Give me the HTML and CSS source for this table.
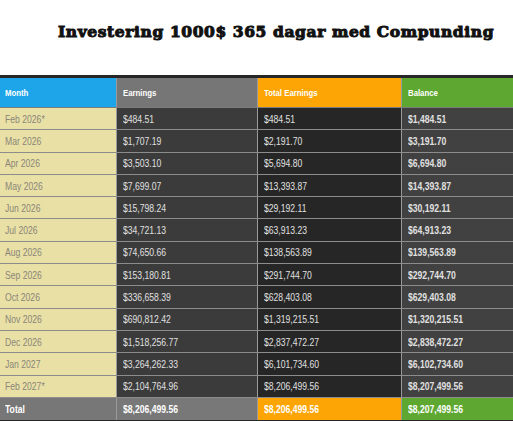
FILE: index.html
```html
<!DOCTYPE html>
<html lang="sv">
<head>
<meta charset="utf-8">
<title>Investering</title>
<link rel="stylesheet" href="styles.css">
</head>
<body>
<h1 class="title">Investering 1000$ 365 dagar med Compunding</h1>
<table class="grid">
  <colgroup>
    <col class="c-month"><col class="c-earn"><col class="c-total"><col class="c-bal">
  </colgroup>
  <thead>
    <tr>
      <th class="h-month"><span class="v">Month</span></th>
      <th class="h-earn"><span class="v">Earnings</span></th>
      <th class="h-total"><span class="v">Total Earnings</span></th>
      <th class="h-bal"><span class="v">Balance</span></th>
    </tr>
  </thead>
  <tbody>
    <tr><td class="m"><span class="v">Feb 2026*</span></td><td class="e"><span class="v">$484.51</span></td><td class="t"><span class="v">$484.51</span></td><td class="b"><span class="v">$1,484.51</span></td></tr>
    <tr><td class="m"><span class="v">Mar 2026</span></td><td class="e"><span class="v">$1,707.19</span></td><td class="t"><span class="v">$2,191.70</span></td><td class="b"><span class="v">$3,191.70</span></td></tr>
    <tr><td class="m"><span class="v">Apr 2026</span></td><td class="e"><span class="v">$3,503.10</span></td><td class="t"><span class="v">$5,694.80</span></td><td class="b"><span class="v">$6,694.80</span></td></tr>
    <tr><td class="m"><span class="v">May 2026</span></td><td class="e"><span class="v">$7,699.07</span></td><td class="t"><span class="v">$13,393.87</span></td><td class="b"><span class="v">$14,393.87</span></td></tr>
    <tr><td class="m"><span class="v">Jun 2026</span></td><td class="e"><span class="v">$15,798.24</span></td><td class="t"><span class="v">$29,192.11</span></td><td class="b"><span class="v">$30,192.11</span></td></tr>
    <tr><td class="m"><span class="v">Jul 2026</span></td><td class="e"><span class="v">$34,721.13</span></td><td class="t"><span class="v">$63,913.23</span></td><td class="b"><span class="v">$64,913.23</span></td></tr>
    <tr><td class="m"><span class="v">Aug 2026</span></td><td class="e"><span class="v">$74,650.66</span></td><td class="t"><span class="v">$138,563.89</span></td><td class="b"><span class="v">$139,563.89</span></td></tr>
    <tr><td class="m"><span class="v">Sep 2026</span></td><td class="e"><span class="v">$153,180.81</span></td><td class="t"><span class="v">$291,744.70</span></td><td class="b"><span class="v">$292,744.70</span></td></tr>
    <tr><td class="m"><span class="v">Oct 2026</span></td><td class="e"><span class="v">$336,658.39</span></td><td class="t"><span class="v">$628,403.08</span></td><td class="b"><span class="v">$629,403.08</span></td></tr>
    <tr><td class="m"><span class="v">Nov 2026</span></td><td class="e"><span class="v">$690,812.42</span></td><td class="t"><span class="v">$1,319,215.51</span></td><td class="b"><span class="v">$1,320,215.51</span></td></tr>
    <tr><td class="m"><span class="v">Dec 2026</span></td><td class="e"><span class="v">$1,518,256.77</span></td><td class="t"><span class="v">$2,837,472.27</span></td><td class="b"><span class="v">$2,838,472.27</span></td></tr>
    <tr><td class="m"><span class="v">Jan 2027</span></td><td class="e"><span class="v">$3,264,262.33</span></td><td class="t"><span class="v">$6,101,734.60</span></td><td class="b"><span class="v">$6,102,734.60</span></td></tr>
    <tr><td class="m"><span class="v">Feb 2027*</span></td><td class="e"><span class="v">$2,104,764.96</span></td><td class="t"><span class="v">$8,206,499.56</span></td><td class="b"><span class="v">$8,207,499.56</span></td></tr>
  </tbody>
  <tfoot>
    <tr>
      <td class="f-month"><span class="v">Total</span></td>
      <td class="f-earn"><span class="v">$8,206,499.56</span></td>
      <td class="f-total"><span class="v">$8,206,499.56</span></td>
      <td class="f-bal"><span class="v">$8,207,499.56</span></td>
    </tr>
  </tfoot>
</table>
</body>
</html>
```
FILE: styles.css
```css
html, body {
  margin: 0;
  padding: 0;
  background: #ffffff;
}
body {
  width: 513px;
  height: 421px;
  overflow: hidden;
  font-family: "Liberation Sans", Arial, sans-serif;
}
.title {
  margin: 0;
  padding: 22px 0 0 58px;
  height: 56px;
  box-sizing: border-box;
  font-family: "DejaVu Serif", serif;
  font-weight: 900;
  font-size: 15.5px;
  letter-spacing: 0.6px;
  line-height: 20px;
  color: #111;
  -webkit-text-stroke: 1px #111;
  white-space: nowrap;
}
.grid {
  margin-top: 19px;
  width: 513px;
  border-collapse: collapse;
  table-layout: fixed;
  border-top: 3px solid #262626;
  font-size: 10.5px;
}
.c-month { width: 116px; }
.c-earn { width: 141px; }
.c-total { width: 144px; }
.c-bal { width: 112px; }
th, td {
  text-align: left;
  padding: 0 0 0 6px;
  border-left: 1px solid #9a9a9a;
  border-bottom: 1px solid #8c8c8c;
  white-space: nowrap;
  overflow: hidden;
}
th:first-child, td:first-child {
  border-left: none;
  padding-left: 5px;
}
.v {
  display: inline-block;
  transform: scaleX(0.82);
  transform-origin: left center;
}
th {
  height: 29px;
  font-size: 9.5px;
  font-weight: bold;
  color: #ffffff;
  border-bottom: 1px solid #7c7c7c;
}
.h-month { background: #1ea5e9; }
.h-earn { background: #767676; }
.h-total { background: #fca504; }
.h-bal { background: #5ea832; }
tbody td {
  height: 21.3px;
  color: #e0e0e0;
}
.m { background: #e9e0a6; color: #8a8678; }
.e { background: #3b3b3b; }
.t { background: #262626; }
.b { background: #414141; font-weight: bold; }
tfoot td {
  height: 22px;
  font-weight: bold;
  color: #ffffff;
  border-bottom: 2px solid #262626;
}
.f-month { background: #777777; }
.f-earn { background: #787878; }
.f-total { background: #fca504; }
.f-bal { background: #5ea832; }
```
